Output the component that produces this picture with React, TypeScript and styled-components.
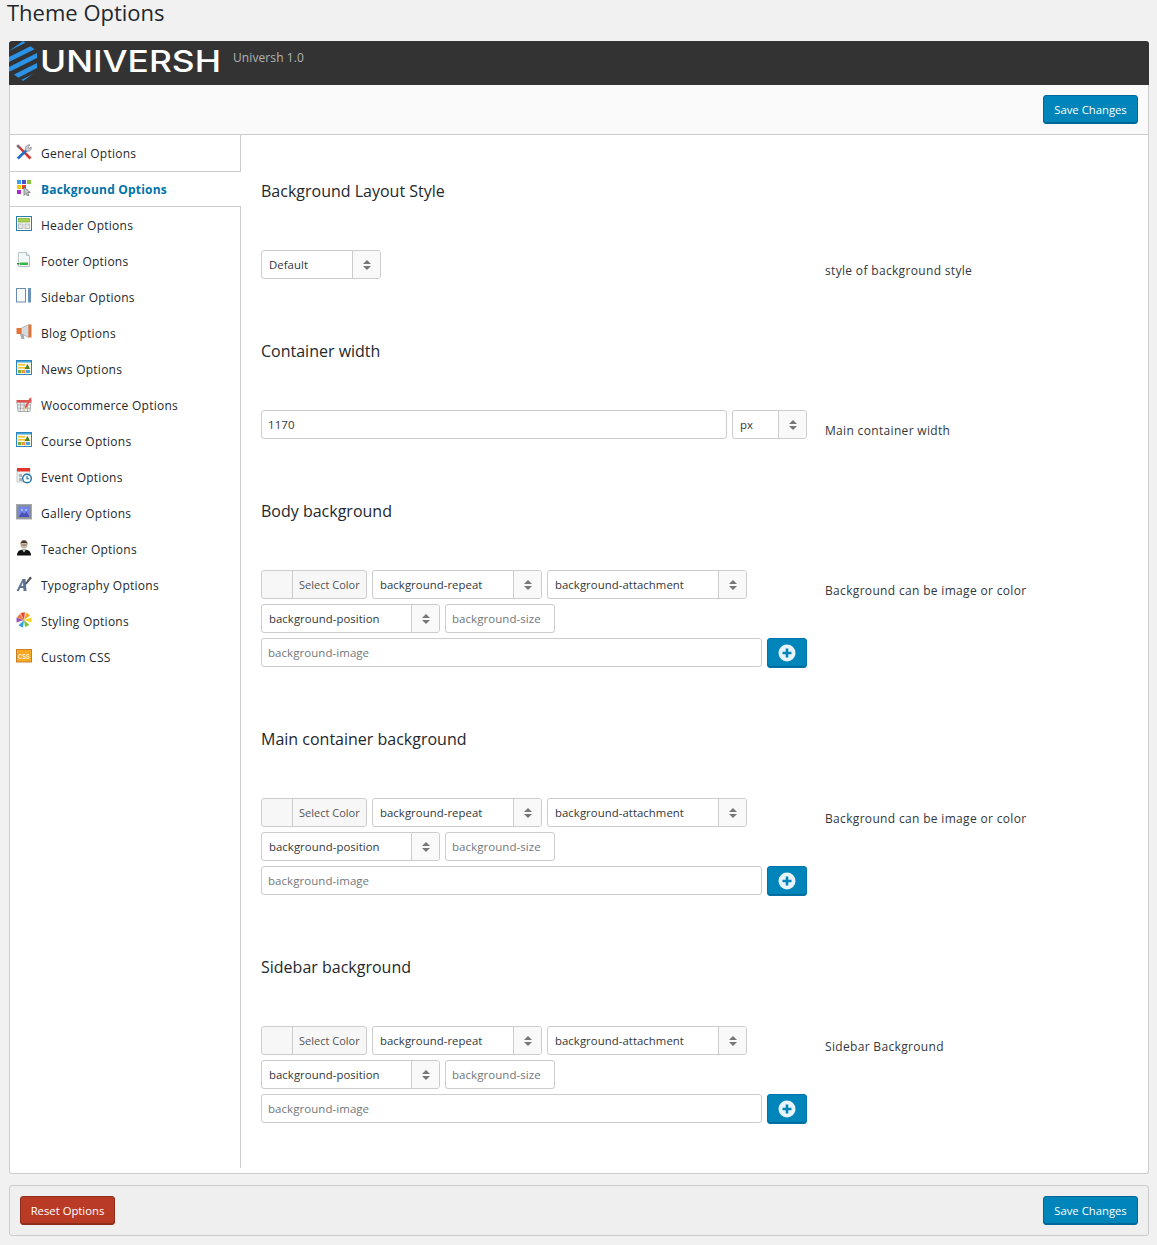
import React from 'react';
import styled, { createGlobalStyle } from 'styled-components';

const GlobalStyle = createGlobalStyle`
  html, body {
    margin: 0;
    padding: 0;
    background: #f1f1f1;
    color: #23282d;
    font-family: "Open Sans", "Liberation Sans", sans-serif;
    font-size: 13px;
  }
  * { box-sizing: border-box; }
`;

/* ---------- drawings ---------- */

const Icon = styled.svg.attrs({ viewBox: '0 0 16 16', width: 16, height: 16 })`
  flex: none;
  display: block;
  margin-bottom: 2px;
`;

const GeneralIcon = () => (
  <Icon>
    <path d="M.5 2L2 .5 15.500 13.500 13.500 15.500z" fill="#d8342c" />
    <path d="M.5 2L2 .5l2.500 2-2 2z" fill="#6f7377" />
    <path d="M10 5L.8 13.500l2 2L11.500 7z" fill="#1f6fc4" />
    <path d="M9.500 6.500C8.500 3.500 10.500.5 14 .8l-2 2 1 1.700 2.300-1.500c.5 3.200-2.800 5.500-5.800 3.500z" fill="#c9ccd0" stroke="#6f7377" strokeWidth=".6" />
  </Icon>
);

const BackgroundIcon = () => (
  <Icon>
    <rect x="1" y="0" width="4" height="4" fill="#3aa0ef" />
    <rect x="6" y="0" width="4" height="4" fill="#4a4fd0" />
    <rect x="11" y="0" width="4" height="4" fill="#8cc63f" />
    <rect x="1" y="5" width="4" height="4" fill="#f7c90b" />
    <rect x="6" y="5" width="4" height="4" fill="#e2462c" />
    <rect x="1" y="10" width="4" height="4" fill="#b026cf" />
    <path d="M8 7v8.500l2-2 1.500 2.500 1.500-.8-1.500-2.500 2.800-.2z" fill="#c4c7ca" stroke="#666" strokeWidth=".7" />
  </Icon>
);

const HeaderIcon = () => (
  <Icon>
    <rect x=".5" y=".5" width="15" height="14" fill="#f7f9f2" stroke="#2b7fa8" />
    <rect x="2.500" y="2.500" width="11" height="3.500" fill="#a9d24a" stroke="#6f9a2c" strokeWidth=".6" />
    <rect x="2.500" y="8" width="4.500" height="4.500" fill="#e4e7ea" stroke="#9a9ea2" strokeWidth=".6" />
    <rect x="9" y="8" width="4.500" height="4.500" fill="#e4e7ea" stroke="#9a9ea2" strokeWidth=".6" />
  </Icon>
);

const FooterIcon = () => (
  <Icon>
    <path d="M2.500.5h8l3 3v11h-11z" fill="#f1f6f6" stroke="#b7c4c4" />
    <path d="M10.500.5v3h3" fill="#dfe8e8" stroke="#b7c4c4" />
    <rect x="4" y="10.500" width="8" height="2.500" fill="#3bb54a" />
    <rect x="1" y="11" width="2.500" height="1.500" fill="#2c8a39" />
  </Icon>
);

const SidebarIcon = () => (
  <Icon>
    <rect x=".5" y=".5" width="9" height="13.500" fill="#f7f9fb" stroke="#6d8cab" />
    <rect x="12" y="0" width="3" height="14.500" fill="#6a92b8" />
  </Icon>
);

const BlogIcon = () => (
  <Icon>
    <path d="M.5 4h5v6h-5z" fill="#e2743a" />
    <path d="M5.500 4L13 .5v13L5.500 10z" fill="#d8dbdd" stroke="#8f9396" strokeWidth=".6" />
    <rect x="12.500" y=".5" width="3" height="13" fill="#e2743a" />
    <path d="M4 10h3.500l1 5H5.500z" fill="#a6aaad" />
  </Icon>
);

const NewsIcon = () => (
  <Icon>
    <rect x=".5" y=".5" width="15" height="14" fill="#f7f8e4" stroke="#2b86c0" />
    <rect x="1" y="1" width="14" height="1.500" fill="#4aa3da" />
    <rect x="2" y="4" width="7" height="1.500" fill="#f2c230" />
    <rect x="2" y="7" width="7" height="1.500" fill="#f2c230" />
    <path d="M8.500 9l3-5L14 9z" fill="#4f7d22" />
    <rect x="2" y="10" width="3.500" height="3" fill="#7bb23c" />
    <rect x="6" y="10" width="3.500" height="3" fill="#ef9a33" />
    <rect x="10" y="10" width="4" height="3" fill="#48a5df" />
  </Icon>
);

const ShopIcon = () => (
  <Icon>
    <path d="M1 6h14l-1 9.500H2z" fill="#eceded" stroke="#9a9da0" strokeWidth=".8" />
    <path d="M4.500 6v9.500M8 6v9.500M11.500 6v9.500M1.500 9h13M1.500 12.200h13" stroke="#9a9da0" strokeWidth=".7" />
    <rect x=".5" y="4" width="15" height="2.500" fill="#d9534f" />
    <path d="M8.500 11L14 1.500 15.800 2.500 10 12.200z" fill="#e9534e" />
    <path d="M8.500 11l1.500 1.200-2.500 2z" fill="#e7c66a" />
  </Icon>
);

const EventIcon = () => (
  <Icon>
    <rect x="1" y="1" width="13" height="13" fill="#eff1f2" stroke="#b5b8bb" strokeWidth=".7" />
    <rect x="1" y="0" width="13" height="3.500" fill="#e3352c" />
    <rect x="3" y="6" width="3" height="3" fill="#aeb4b8" />
    <rect x="3" y="10" width="3" height="3" fill="#aeb4b8" />
    <circle cx="11" cy="10.500" r="4.300" fill="#fff" stroke="#1d72aa" strokeWidth="1.400" />
    <path d="M11 8v2.700h2.200" fill="none" stroke="#1d72aa" strokeWidth="1.100" />
  </Icon>
);

const GalleryIcon = () => (
  <Icon>
    <rect x=".5" y=".5" width="15" height="14.500" fill="#8a9095" stroke="#a3a8ac" />
    <rect x="2.500" y="2.500" width="11" height="10.500" fill="#7385e6" />
    <path d="M2.500 13l3.500-5 2.500 2 2-2.500 3 5.500z" fill="#4c4fb8" />
    <path d="M6 4.500l1 2H5zM10 4.500l1 2H9z" fill="#e6eafc" />
  </Icon>
);

const TeacherIcon = () => (
  <Icon>
    <path d="M1 15.500c0-4 2.500-6 7-6s7 2 7 6z" fill="#111" />
    <circle cx="8" cy="5" r="3.500" fill="#cdb8a4" />
    <path d="M4.500 4.500C4.500 1.500 6 .3 8 .3s3.500 1.200 3.500 4.200l-1-1.500h-5z" fill="#4b3a2c" />
    <path d="M5.500 5h5" stroke="#555" strokeWidth=".7" />
    <path d="M6 9.500h4L8 12.500z" fill="#b9d3cc" />
  </Icon>
);

const TypographyIcon = () => (
  <Icon>
    <path d="M.5 15L6.500 3h3l1 12H7.500l-.2-3H4.200l-1.400 3z" fill="#5d7291" />
    <path d="M5.200 10h2l-.3-4z" fill="#f3f3f3" />
    <path d="M9 7.500L14 .5 16 2l-5.500 6.500z" fill="#55595d" />
  </Icon>
);

const StylingIcon = () => (
  <Icon>
    <path d="M8 8L4.500 1 9 .3z" fill="#e2462c" />
    <path d="M8 8l2.500-7.500 3.500 3z" fill="#f5a623" />
    <path d="M8 8l7.500-2.500v5z" fill="#f7d51d" />
    <path d="M8 8l5.500 5-4.500 2z" fill="#7bc043" />
    <path d="M8 8l-1 7.500-4.500-2z" fill="#2f9fe0" />
    <path d="M8 8l-7.500 2.500v-5z" fill="#9b59b6" />
    <path d="M8 8L.8 5.500 4 1.800z" fill="#ef7d3b" />
  </Icon>
);

const CssIconText = styled.text`
  font-family: "Liberation Sans", sans-serif;
  font-size: 7px;
  font-weight: 700;
  fill: #fff3c4;
`;

const CssIcon = () => (
  <Icon>
    <rect x=".5" y="1.500" width="15" height="12.500" fill="#f7a823" stroke="#c9812a" />
    <CssIconText x="8" y="10.500" textAnchor="middle" textLength="12" lengthAdjust="spacingAndGlyphs">CSS</CssIconText>
  </Icon>
);

const LogoWord = styled.text`
  font-family: Inter, "Open Sans", sans-serif;
  font-size: 30px;
  font-weight: 500;
  fill: #fff;
`;

const LogoMark = () => (
  <svg width="212" height="44" viewBox="0 0 212 44" style={{ display: 'block', flex: 'none' }}>
    <defs>
      <clipPath id="hex">
        <path d="M0 10L14 0l14 10v20L14 40 0 30z" />
      </clipPath>
    </defs>
    <g clipPath="url(#hex)" fill="#2a93e8">
      <path d="M-2 6L18-4l4 3L-2 11z" />
      <path d="M-2 17L28 2v5L-2 22z" />
      <path d="M-2 27L28 12v5L-2 32z" />
      <path d="M0 36L28 22v5L3 40z" />
      <path d="M8 41L28 31v5L14 44z" />
    </g>
    <LogoWord x="31" y="31" textLength="181" lengthAdjust="spacingAndGlyphs">UNIVERSH</LogoWord>
  </svg>
);

const SortArrows = () => (
  <svg width="8" height="10" viewBox="0 0 8 10" style={{ display: 'block' }}>
    <path d="M4 0l4 4H0zM4 10L0 6h8z" fill="#777" />
  </svg>
);

const PlusCircle = () => (
  <svg width="18" height="18" viewBox="0 0 18 18" style={{ display: 'block' }}>
    <circle cx="9" cy="9" r="8.500" fill="#e8f4fa" />
    <path d="M9 4.500v9M4.500 9h9" stroke="#0085ba" strokeWidth="2.600" />
  </svg>
);

/* ---------- page parts ---------- */

const Page = styled.div`
  padding: 0 8px 9px 9px;
`;

const Title = styled.h1`
  margin: 0 0 0 -2px;
  height: 41px;
  font-size: 22px;
  font-weight: 400;
  line-height: 25px;
  color: #23282d;
`;

const Panel = styled.div`
  background: #fff;
  border: 1px solid #ccc;
  border-top: 0;
  border-radius: 3px;
  padding-bottom: 5px;
`;

const Brand = styled.header`
  display: flex;
  align-items: flex-start;
  height: 44px;
  margin: 0 -1px;
  background: #333;
  border-radius: 3px 3px 0 0;
`;

const Version = styled.span`
  margin: 8px 0 0 12px;
  font-size: 12px;
  line-height: 18px;
  letter-spacing: 0.1px;
  color: #b4b4b4;
`;

const Toolbar = styled.div`
  display: flex;
  justify-content: flex-end;
  align-items: flex-start;
  height: 50px;
  padding: 10px 10px 0 0;
  background: #fafafa;
  border-bottom: 1px solid #ccc;
`;

const Button = styled.button<{ $tone: 'blue' | 'red' }>`
  width: 95px;
  height: 29px;
  padding: 0;
  border: 1px solid ${({ $tone }) => ($tone === 'blue' ? '#006799' : '#8f2c1c')};
  border-radius: 3px;
  background: ${({ $tone }) => ($tone === 'blue' ? '#0085ba' : '#b93b26')};
  box-shadow: inset 0 -1px 0 ${({ $tone }) => ($tone === 'blue' ? '#006799' : '#8f2c1c')};
  color: #fff;
  font-family: inherit;
  font-size: 11.3px;
  line-height: 27px;
`;

const Body = styled.div`
  display: flex;
  align-items: stretch;
`;

const Sidebar = styled.nav`
  flex: none;
  width: 231px;
  border-right: 1px solid #ccc;
`;

const MenuItem = styled.div<{ $active?: boolean }>`
  display: flex;
  align-items: center;
  gap: 9px;
  height: 36px;
  padding-left: 6px;
  margin-right: ${({ $active }) => ($active ? '-1px' : '0')};
  background: #fff;
  font-size: 12px;
  letter-spacing: ${({ $active }) => ($active ? '0.2px' : '0.25px')};
  font-weight: ${({ $active }) => ($active ? 700 : 400)};
  color: ${({ $active }) => ($active ? '#0073aa' : '#23282d')};
  border-top: ${({ $active }) => ($active ? '1px solid #ccc' : '0')};
  border-bottom: ${({ $active }) => ($active ? '1px solid #ccc' : '0')};
  position: relative;
`;

const Content = styled.main`
  flex: 1;
  padding: 44px 0 45px 20px;
`;

const Section = styled.section`
  & + & {
    margin-top: 60px;
  }
`;

const Heading = styled.h2`
  margin: 0 0 47px;
  font-size: 16px;
  font-weight: 400;
  line-height: 24px;
  color: #23282d;
`;

const SectionBody = styled.div`
  display: grid;
  grid-template-columns: 546px 1fr;
  column-gap: 18px;
`;

const Fields = styled.div`
  display: flex;
  flex-direction: column;
  gap: 5px;
`;

const FieldRow = styled.div`
  display: flex;
  gap: 5px;
  height: 29px;
`;

const Description = styled.p`
  margin: 13px 0 0;
  font-size: 12px;
  line-height: 16px;
  letter-spacing: 0.33px;
  color: #32373c;
`;

const SelectBox = styled.div<{ $width: number }>`
  display: flex;
  align-items: stretch;
  flex: none;
  width: ${({ $width }) => $width}px;
  height: 29px;
  background: #fff;
  border: 1px solid #ccc;
  border-radius: 3px;
  font-size: 11.35px;
  letter-spacing: 0.06px;
  color: #32373c;
`;

const SelectLabel = styled.span`
  flex: 1;
  padding-left: 7px;
  line-height: 27px;
`;

const SelectArrow = styled.span`
  flex: none;
  display: flex;
  align-items: center;
  justify-content: center;
  width: 28px;
  background: #f9f9f9;
  border-left: 1px solid #ccc;
  border-radius: 0 2px 2px 0;
`;

const TextInput = styled.input<{ $width: number }>`
  width: ${({ $width }) => $width}px;
  height: 29px;
  padding: 0 6px;
  background: #fff;
  border: 1px solid #ccc;
  border-radius: 3px;
  outline: 0;
  font-family: inherit;
  font-size: 11.5px;
  letter-spacing: 0.05px;
  color: #32373c;

  &::placeholder {
    color: #72777c;
    opacity: 1;
  }
`;

const ColorButton = styled.div`
  display: flex;
  flex: none;
  width: 106px;
  height: 29px;
  background: #f7f7f7;
  border: 1px solid #ccc;
  border-radius: 3px;
  font-size: 11px;
  color: #555;
`;

const ColorSwatch = styled.span`
  flex: none;
  width: 31px;
  border-right: 1px solid #ccc;
`;

const ColorLabel = styled.span`
  padding-left: 6px;
  line-height: 27px;
`;

const UploadButton = styled.button`
  display: flex;
  flex: none;
  align-items: center;
  justify-content: center;
  width: 40px;
  height: 30px;
  padding: 0;
  background: #0085ba;
  border: 1px solid #0073aa;
  border-radius: 3px;
  box-shadow: inset 0 -1px 0 #006799;
`;

const Footer = styled.footer`
  display: flex;
  justify-content: space-between;
  align-items: flex-start;
  height: 51px;
  margin-top: 11px;
  padding: 10px 10px 0;
  background: #efefef;
  border: 1px solid #ccc;
  border-radius: 3px;
`;

/* ---------- data ---------- */

const menu: { label: string; icon: React.ComponentType; active?: boolean }[] = [
  { label: 'General Options', icon: GeneralIcon },
  { label: 'Background Options', icon: BackgroundIcon, active: true },
  { label: 'Header Options', icon: HeaderIcon },
  { label: 'Footer Options', icon: FooterIcon },
  { label: 'Sidebar Options', icon: SidebarIcon },
  { label: 'Blog Options', icon: BlogIcon },
  { label: 'News Options', icon: NewsIcon },
  { label: 'Woocommerce Options', icon: ShopIcon },
  { label: 'Course Options', icon: NewsIcon },
  { label: 'Event Options', icon: EventIcon },
  { label: 'Gallery Options', icon: GalleryIcon },
  { label: 'Teacher Options', icon: TeacherIcon },
  { label: 'Typography Options', icon: TypographyIcon },
  { label: 'Styling Options', icon: StylingIcon },
  { label: 'Custom CSS', icon: CssIcon },
];

function Select({ label, width }: { label: string; width: number }) {
  return (
    <SelectBox $width={width}>
      <SelectLabel>{label}</SelectLabel>
      <SelectArrow>
        <SortArrows />
      </SelectArrow>
    </SelectBox>
  );
}

function BackgroundFields() {
  return (
    <Fields>
      <FieldRow>
        <ColorButton>
          <ColorSwatch />
          <ColorLabel>Select Color</ColorLabel>
        </ColorButton>
        <Select label="background-repeat" width={170} />
        <Select label="background-attachment" width={200} />
      </FieldRow>
      <FieldRow>
        <Select label="background-position" width={179} />
        <TextInput $width={110} placeholder="background-size" readOnly />
      </FieldRow>
      <FieldRow>
        <TextInput $width={501} placeholder="background-image" readOnly />
        <UploadButton>
          <PlusCircle />
        </UploadButton>
      </FieldRow>
    </Fields>
  );
}

export default function App() {
  return (
    <Page>
      <GlobalStyle />
      <Title>Theme Options</Title>
      <Panel>
        <Brand>
          <LogoMark />
          <Version>Universh 1.0</Version>
        </Brand>
        <Toolbar>
          <Button $tone="blue">Save Changes</Button>
        </Toolbar>
        <Body>
          <Sidebar>
            {menu.map(({ label, icon: MenuIcon, active }) => (
              <MenuItem key={label} $active={active}>
                <MenuIcon />
                {label}
              </MenuItem>
            ))}
          </Sidebar>
          <Content>
            <Section>
              <Heading>Background Layout Style</Heading>
              <SectionBody>
                <Fields>
                  <Select label="Default" width={120} />
                </Fields>
                <Description>style of background style</Description>
              </SectionBody>
            </Section>
            <Section>
              <Heading>Container width</Heading>
              <SectionBody>
                <Fields>
                  <FieldRow>
                    <TextInput $width={466} defaultValue="1170" />
                    <Select label="px" width={75} />
                  </FieldRow>
                </Fields>
                <Description>Main container width</Description>
              </SectionBody>
            </Section>
            <Section>
              <Heading>Body background</Heading>
              <SectionBody>
                <BackgroundFields />
                <Description>Background can be image or color</Description>
              </SectionBody>
            </Section>
            <Section>
              <Heading>Main container background</Heading>
              <SectionBody>
                <BackgroundFields />
                <Description>Background can be image or color</Description>
              </SectionBody>
            </Section>
            <Section>
              <Heading>Sidebar background</Heading>
              <SectionBody>
                <BackgroundFields />
                <Description>Sidebar Background</Description>
              </SectionBody>
            </Section>
          </Content>
        </Body>
      </Panel>
      <Footer>
        <Button $tone="red">Reset Options</Button>
        <Button $tone="blue">Save Changes</Button>
      </Footer>
    </Page>
  );
}
